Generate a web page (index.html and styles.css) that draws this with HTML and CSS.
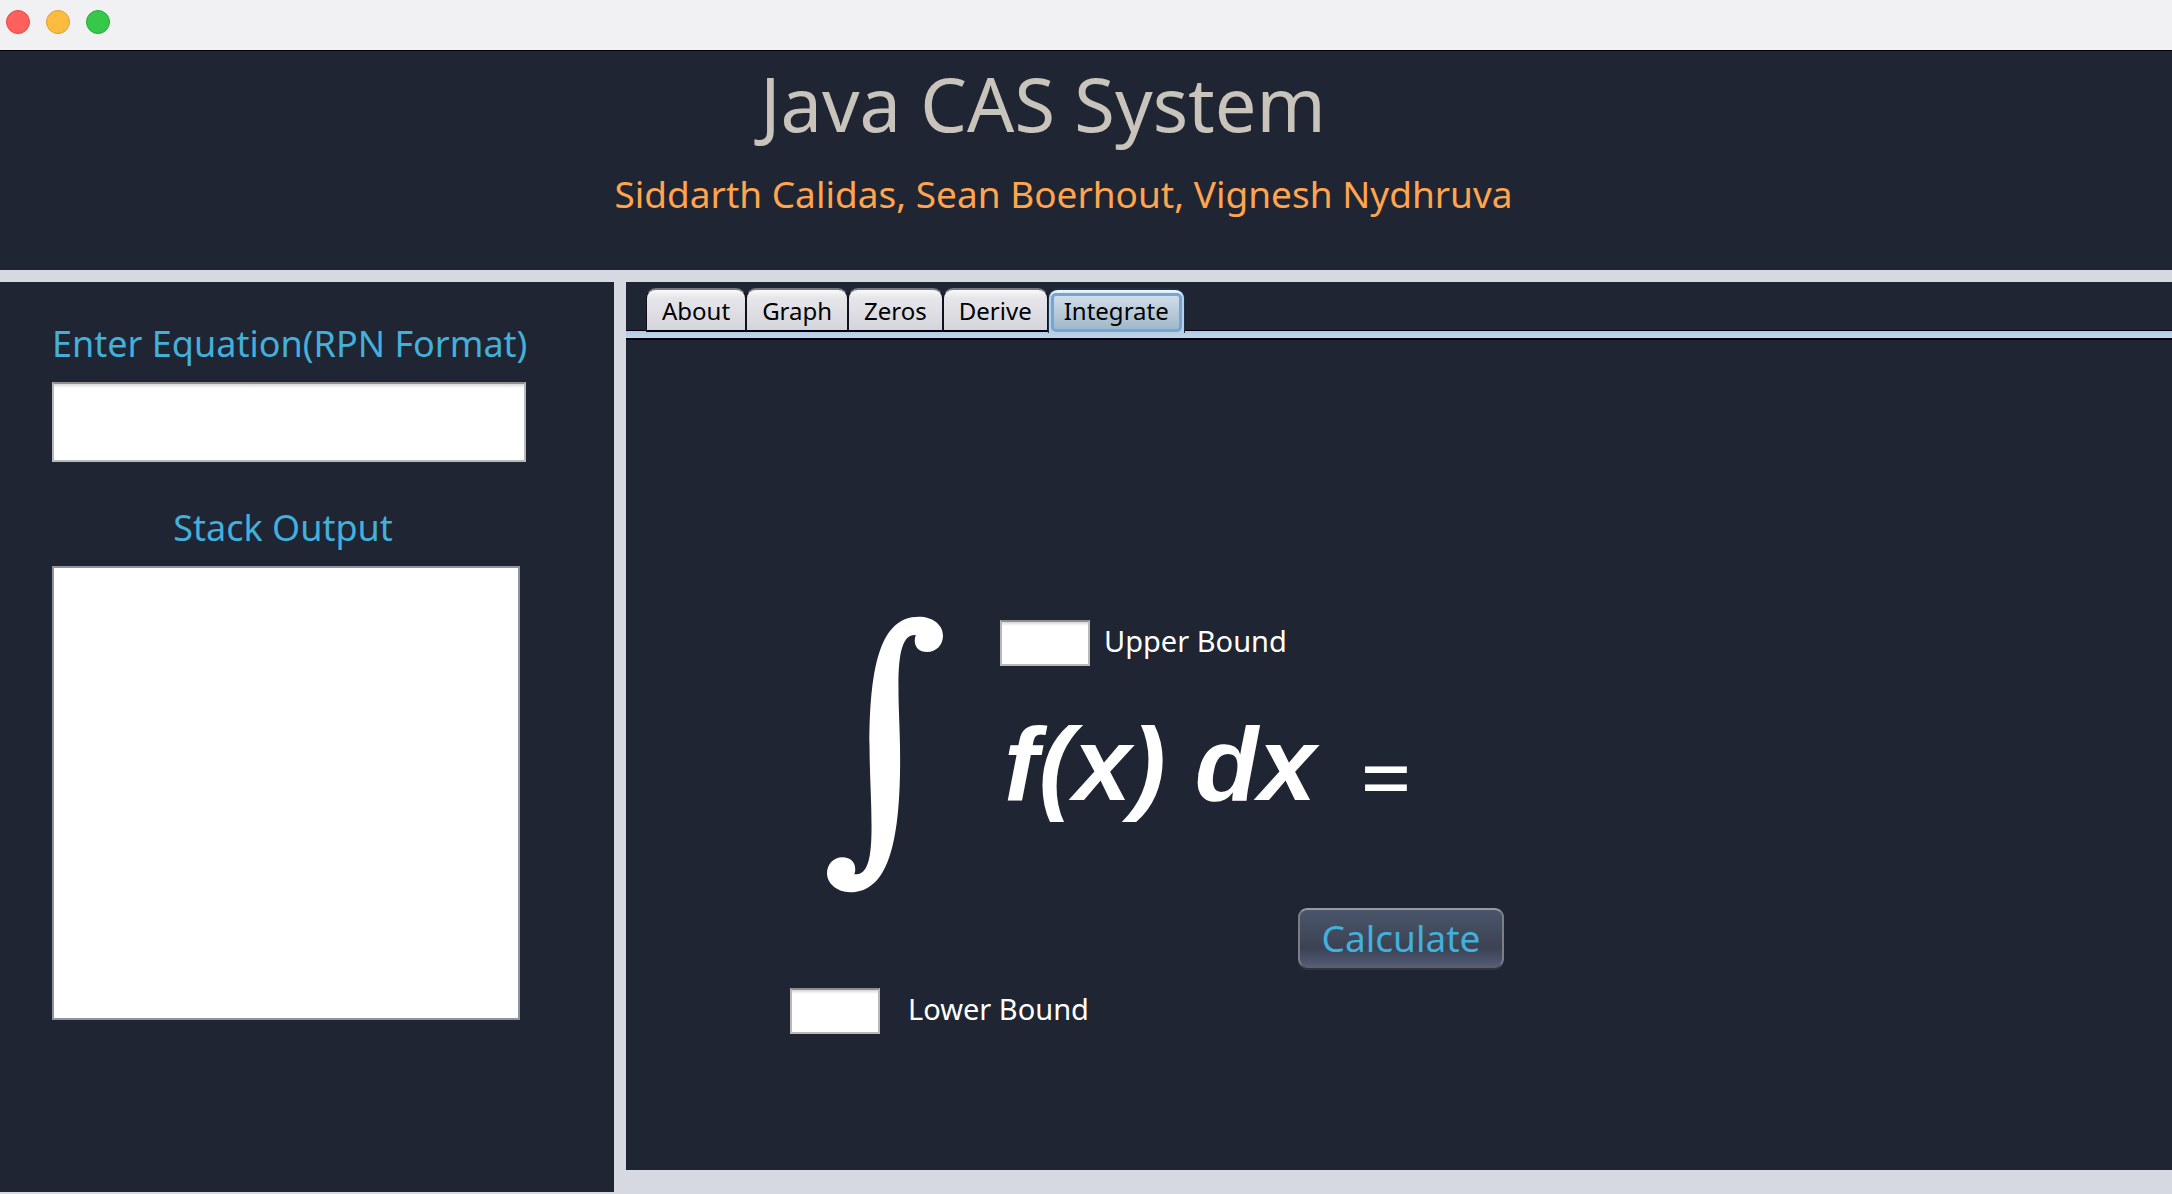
FILE: index.html
```html
<!DOCTYPE html>
<html lang="en">
<head>
<meta charset="utf-8">
<title>Java CAS System</title>
<link rel="stylesheet" href="styles.css">
</head>
<body>
<div class="titlebar">
  <button class="light light-close" type="button" aria-label="Close"></button>
  <button class="light light-minimize" type="button" aria-label="Minimize"></button>
  <button class="light light-zoom" type="button" aria-label="Zoom"></button>
</div>
<header class="banner">
  <h1 class="banner-title">Java CAS System</h1>
  <p class="banner-authors">Siddarth Calidas, Sean Boerhout, Vignesh Nydhruva</p>
</header>
<div class="workspace">
  <aside class="sidebar">
    <label class="sidebar-label" for="equation">Enter Equation(RPN Format)</label>
    <input class="field equation" id="equation" type="text">
    <label class="sidebar-label sidebar-label-stack" for="stack">Stack Output</label>
    <textarea class="stack" id="stack"></textarea>
  </aside>
  <main class="panel">
    <div class="tabs" role="tablist">
      <button class="tab" type="button" role="tab" aria-selected="false">About</button>
      <button class="tab" type="button" role="tab" aria-selected="false">Graph</button>
      <button class="tab" type="button" role="tab" aria-selected="false">Zeros</button>
      <button class="tab" type="button" role="tab" aria-selected="false">Derive</button>
      <button class="tab tab-selected" type="button" role="tab" aria-selected="true"><span class="tab-glow">Integrate</span></button>
    </div>
    <div class="band"></div>
    <form class="integral">
      <div class="integral-main">
        <svg class="integral-sign" viewBox="140 109 349 831" role="img" aria-label="Integral">
          <path fill="#fff" d="M416 110C458 110 489 134 489 167C489 195 468 216 441 216C418 216 404 202 404 182C404 176 405 170 407 165C370 162 355 210 355 318C355 400 360 450 360 540C360 800 320 939 210 939C170 939 140 912 140 882C140 855 160 834 186 834C212 834 225 850 225 870C225 876 224 880 222 885C262 888 274 840 274 740C274 660 268 580 268 500C268 260 300 110 416 110Z"/>
        </svg>
        <div class="integrand">
          <div class="bound bound-upper">
            <input class="field bound-input" id="upper" type="text">
            <label class="bound-label" for="upper">Upper Bound</label>
          </div>
          <div class="expression">
            <span class="function">f(x) dx</span>
            <span class="equals">=</span>
          </div>
        </div>
      </div>
      <button class="calculate" type="button">Calculate</button>
      <div class="bound bound-lower">
        <input class="field bound-input" id="lower" type="text">
        <label class="bound-label" for="lower">Lower Bound</label>
      </div>
    </form>
  </main>
</div>
</body>
</html>
```
FILE: styles.css
```css
* { box-sizing: border-box; }

body {
  margin: 0;
  min-height: 100vh;
  display: flex;
  flex-direction: column;
  background: #d6d9e1;
  font-family: "Noto Sans", "Open Sans", sans-serif;
}

button, input, textarea { font-family: inherit; margin: 0; }

/* Window title bar */
.titlebar {
  display: flex;
  align-items: center;
  gap: 16px;
  height: 51px;
  padding: 0 6px 6px;
  background: #f1f1f4;
  border-bottom: 1px solid #000008;
}
.light {
  width: 24px;
  height: 24px;
  padding: 0;
  border: 1px solid;
  border-radius: 50%;
}
.light-close { background: #fe605c; border-color: #e04b48; }
.light-minimize { background: #fdbc40; border-color: #dd9f35; }
.light-zoom { background: #35c84a; border-color: #26a935; }

/* Heading */
.banner {
  padding: 13px 0 52px;
  background: #1f2532;
  text-align: center;
}
.banner-title {
  margin: 0 0 26px;
  padding-right: 86px;
  font-size: 74px;
  line-height: 80px;
  font-weight: 400;
  color: #c8c4bc;
}
.banner-authors {
  margin: 0;
  padding-right: 45px;
  font-size: 37px;
  line-height: 48px;
  color: #ffa54f;
}

.workspace {
  flex: 1;
  display: flex;
  gap: 12px;
  padding-top: 12px;
}

/* Equation entry */
.sidebar {
  flex: 0 0 614px;
  min-width: 0;
  display: flex;
  flex-direction: column;
  margin-bottom: 2px;
  padding: 38px 88px 60px 52px;
  background: #1f2532;
}
.sidebar-label {
  margin-bottom: 14px;
  font-size: 36px;
  line-height: 48px;
  white-space: nowrap;
  color: #43b0dc;
}
.sidebar-label-stack { margin-top: 42px; padding-right: 12px; text-align: center; }
.field {
  padding: 0 8px;
  border: 2px solid #b8bab9;
  border-top-color: #8f8f8f;
  border-radius: 0;
  background: #fff linear-gradient(#d8d8d8, #fff 4px) no-repeat;
  font-size: 29px;
}
.equation { height: 80px; }
.stack {
  height: 454px;
  margin-right: 6px;
  padding: 8px;
  border: 2px solid #8f94a0;
  border-radius: 0;
  background: #fff;
  font-size: 29px;
  resize: none;
}

/* Tabbed panel */
.panel {
  flex: 1;
  display: flex;
  flex-direction: column;
  margin-bottom: 24px;
  background: #1f2532;
}
.tabs {
  display: flex;
  height: 48px;
  padding: 6px 20px 0;
}
.tab {
  position: relative;
  z-index: 1;
  height: 44px;
  padding: 1px 15px 0;
  border: 1px solid #10101f;
  border-top: 2px solid #77777f;
  border-bottom: 2px solid #000014;
  border-radius: 10px 10px 0 0;
  background: linear-gradient(#fafafc, #e6e6ea 8px, #d4d4db);
  font-size: 24px;
  line-height: 40px;
  color: #000;
}
.tab-selected {
  height: 45px;
  padding: 2px 2px 0;
  border-color: #1c2f45;
  border-bottom: 0;
  background: linear-gradient(#f4f8fc, #b9cfe4 8px, #b9cfe4);
}
.tab-glow {
  display: block;
  height: 39px;
  padding: 0 10px;
  border: 3px solid #73a5d5;
  border-radius: 5px;
  background: linear-gradient(#d0dde8, #a0b8cb);
  line-height: 29px;
}
.band {
  height: 10px;
  border-top: 1px solid #000014;
  border-bottom: 2px solid #000014;
  background: linear-gradient(#b5c8df, #c0d8ea);
}

/* Integral form */
.integral {
  display: flex;
  flex-direction: column;
  align-items: flex-start;
  padding: 276px 40px 60px 164px;
}
.integral-main {
  display: flex;
  gap: 57px;
  padding-left: 37px;
}
.integral-sign { width: 116px; height: 277px; }
.integrand { padding-top: 4px; }
.bound { display: flex; }
.bound-upper { gap: 14px; margin-bottom: 35px; }
.bound-lower { gap: 28px; margin-top: 20px; }
.bound-input { width: 90px; height: 46px; }
.bound-label {
  font-size: 29px;
  line-height: 42px;
  color: #fff;
}
.expression {
  display: flex;
  align-items: flex-end;
  gap: 44px;
  padding-left: 4px;
  color: #fff;
}
.function {
  font-family: "Liberation Sans", Arial, sans-serif;
  font-size: 104px;
  line-height: 126px;
  font-weight: 700;
  font-style: italic;
}
.equals { font-size: 91px; line-height: 102px; }
.calculate {
  width: 206px;
  height: 60px;
  margin: 15px 0 0 508px;
  padding: 0;
  border: 2px solid #7b7f84;
  border-top-color: #979ba1;
  border-bottom-color: #5d5f66;
  border-radius: 9px;
  background: linear-gradient(#4b566b, #3b4253 68%, #525b77);
  box-shadow: 0 2px 0 #2d3341;
  font-size: 37px;
  line-height: 56px;
  color: #43b0dc;
}
```
